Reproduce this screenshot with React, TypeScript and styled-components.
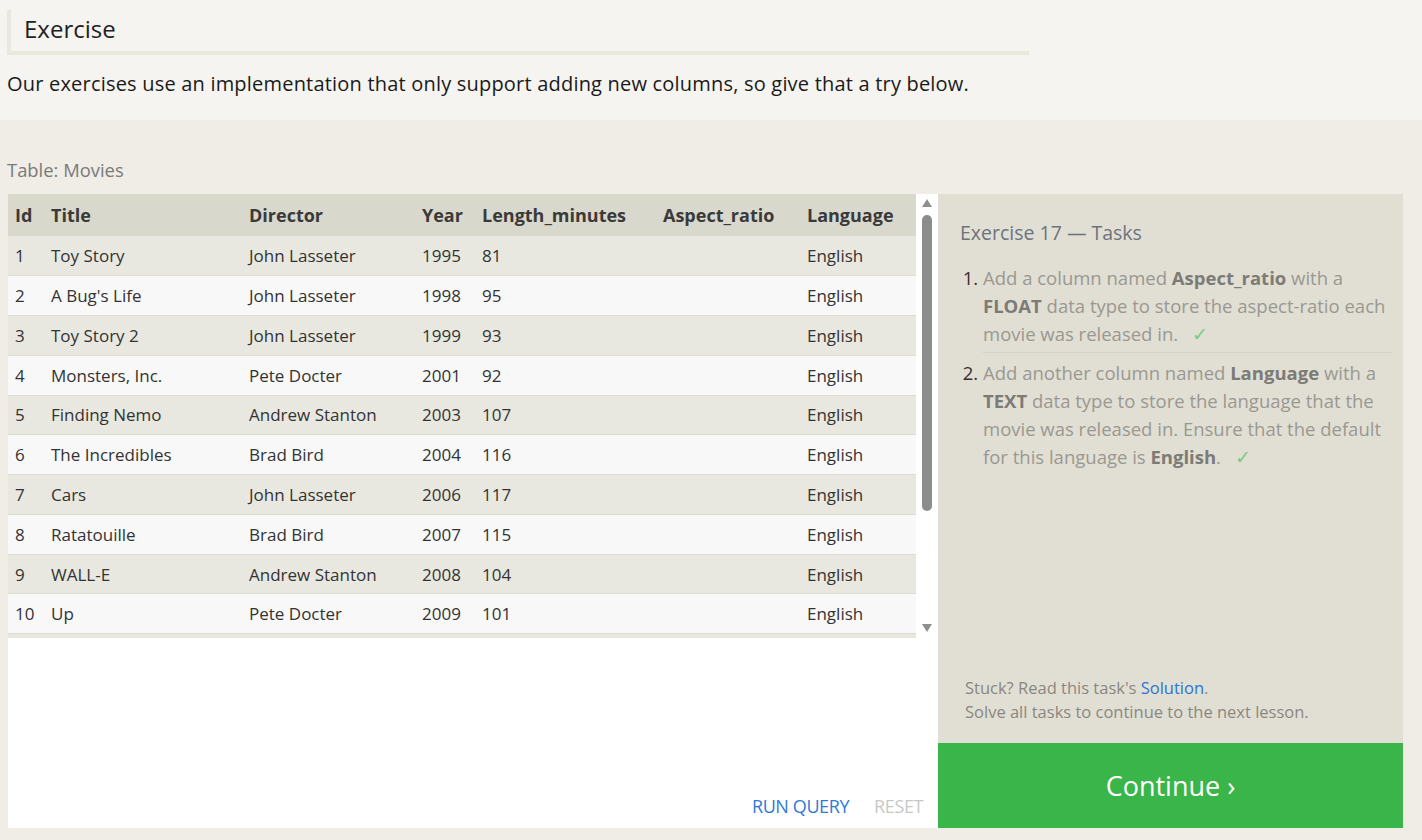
import React from "react";
import styled, { createGlobalStyle } from "styled-components";

const GlobalStyle = createGlobalStyle`
  html, body { margin: 0; padding: 0; }
  body {
    background: #efede6;
    font-family: "Open Sans", "Noto Sans", sans-serif;
    color: #333;
    -webkit-font-smoothing: antialiased;
  }
`;

const Page = styled.div`
  width: 1422px;
  height: 840px;
  overflow: hidden;
  display: flex;
  flex-direction: column;
`;

const Intro = styled.section`
  background: #f5f4f0;
  height: 120px;
  box-sizing: border-box;
  padding: 10px 0 0 7px;
`;

const Heading = styled.h2`
  margin: 0;
  width: 1022px;
  box-sizing: border-box;
  height: 45px;
  border-left: 4px solid #e8e8df;
  border-bottom: 4px solid #e8e8df;
  padding-left: 13px;
  font-size: 24px;
  font-weight: 400;
  line-height: 37px;
  color: #222;
`;

const Lead = styled.p`
  margin: 16px 0 0;
  font-size: 20px;
  letter-spacing: 0.2px;
  line-height: 26px;
  color: #1a1a1a;
`;

const Workspace = styled.section`
  flex: 1;
  box-sizing: border-box;
  padding: 38px 19px 12px 8px;
  display: flex;
  flex-direction: column;
`;

const TableLabel = styled.div`
  font-size: 18.4px;
  line-height: 24px;
  color: #7a7a7a;
  margin-left: -1px;
  margin-bottom: 12px;
`;

const Split = styled.div`
  flex: 1;
  display: grid;
  grid-template-columns: 930px 465px;
  min-height: 0;
`;

const LeftColumn = styled.div`
  display: flex;
  flex-direction: column;
  background: #fff;
`;

const TableViewport = styled.div`
  height: 444px;
  display: flex;
`;

const TableClip = styled.div`
  width: 908px;
  overflow: hidden;
`;

const Table = styled.table`
  width: 908px;
  border-collapse: collapse;
  table-layout: fixed;
  font-size: 17px;
`;

const HeadCell = styled.th<{ $w: number }>`
  box-sizing: border-box;
  width: ${(p) => p.$w}px;
  height: 42px;
  padding: 0 0 0 7px;
  text-align: left;
  font-size: 18px;
  font-weight: 700;
  color: #3a3a3a;
  background: #d9d8cc;
  white-space: nowrap;
`;

const Row = styled.tr<{ $odd: boolean }>`
  background: ${(p) => (p.$odd ? "#e9e8e0" : "#f8f8f8")};
  border-bottom: 1px solid #dddcd4;
`;

const Cell = styled.td`
  box-sizing: border-box;
  height: 39.78px;
  padding: 0 0 0 7px;
  color: #333;
  white-space: nowrap;
`;

const Scrollbar = styled.div`
  width: 21px;
  background: #fff;
  display: flex;
  flex-direction: column;
  align-items: center;
`;

const Arrow = styled.div<{ $down?: boolean }>`
  width: 0;
  height: 0;
  border-left: 5px solid transparent;
  border-right: 5px solid transparent;
  ${(p) =>
    p.$down
      ? "border-top: 8px solid #8f8f8f; margin-top: auto; margin-bottom: 6px;"
      : "border-bottom: 8px solid #8f8f8f; margin-top: 5px;"}
`;

const Thumb = styled.div`
  width: 10px;
  height: 296px;
  margin-top: 8px;
  border-radius: 5px;
  background: #8c8c8c;
`;

const Editor = styled.div`
  flex: 1;
  background: #fff;
  display: flex;
  align-items: flex-end;
  justify-content: flex-end;
  padding: 0 15px 10px 0;
  gap: 25px;
`;

const EditorButton = styled.button<{ $muted?: boolean }>`
  border: 0;
  background: transparent;
  padding: 0;
  font-family: "Open Sans", sans-serif;
  font-size: 18px;
  letter-spacing: -0.4px;
  line-height: 24px;
  color: ${(p) => (p.$muted ? "#c8c8c8" : "#2f7ad6")};
  cursor: pointer;
`;

const RightColumn = styled.aside`
  display: flex;
  flex-direction: column;
`;

const TaskPanel = styled.div`
  flex: 1;
  background: #e1dfd4;
  padding: 25px 11px 0 22px;
  display: flex;
  flex-direction: column;
`;

const TaskTitle = styled.h3`
  margin: 0;
  font-size: 19.5px;
  font-weight: 400;
  line-height: 28px;
  color: #6d737e;
`;

const TaskList = styled.ol`
  margin: 17px 0 0;
  padding: 0 0 0 23px;
  font-size: 18.5px;
  line-height: 28px;
  color: #9a9891;
`;

const Task = styled.li<{ $divided?: boolean }>`
  &::marker { color: #3a2f2f; }
  ${(p) =>
    p.$divided
      ? "border-bottom: 1px solid #d4d2c6; padding-bottom: 4px; margin-bottom: 6px;"
      : ""}
`;

const Strong = styled.b`
  color: #7c7b76;
  font-weight: 700;
`;

const Check = styled.span`
  color: #7ccb82;
  margin-left: 14px;
`;

const Hint = styled.p`
  margin: auto 0 19px 5px;
  font-size: 16.5px;
  line-height: 24px;
  color: #8a8780;
`;

const HintLink = styled.a`
  color: #2e74d6;
  text-decoration: none;
`;

const ContinueButton = styled.button`
  height: 85px;
  border: 0;
  background: #3ab54a;
  color: #fff;
  font-family: "Open Sans", sans-serif;
  font-size: 27px;
  cursor: pointer;
`;

const columns: [string, number][] = [
  ["Id", 36],
  ["Title", 198],
  ["Director", 173],
  ["Year", 60],
  ["Length_minutes", 181],
  ["Aspect_ratio", 144],
  ["Language", 116],
];

const movies: [number, string, string, number, number][] = [
  [1, "Toy Story", "John Lasseter", 1995, 81],
  [2, "A Bug's Life", "John Lasseter", 1998, 95],
  [3, "Toy Story 2", "John Lasseter", 1999, 93],
  [4, "Monsters, Inc.", "Pete Docter", 2001, 92],
  [5, "Finding Nemo", "Andrew Stanton", 2003, 107],
  [6, "The Incredibles", "Brad Bird", 2004, 116],
  [7, "Cars", "John Lasseter", 2006, 117],
  [8, "Ratatouille", "Brad Bird", 2007, 115],
  [9, "WALL-E", "Andrew Stanton", 2008, 104],
  [10, "Up", "Pete Docter", 2009, 101],
  [11, "Toy Story 3", "Lee Unkrich", 2010, 103],
  [12, "Cars 2", "John Lasseter", 2011, 120],
  [13, "Brave", "Brenda Chapman", 2012, 102],
  [14, "Monsters University", "Dan Scanlon", 2013, 110],
];

export default function App() {
  return (
    <Page>
      <GlobalStyle />
      <Intro>
        <Heading>Exercise</Heading>
        <Lead>
          Our exercises use an implementation that only support adding new columns, so give that a try below.
        </Lead>
      </Intro>
      <Workspace>
        <TableLabel>Table: Movies</TableLabel>
        <Split>
          <LeftColumn>
            <TableViewport>
              <TableClip>
                <Table>
                  <thead>
                    <tr>
                      {columns.map(([name, w]) => (
                        <HeadCell key={name} $w={w}>
                          {name}
                        </HeadCell>
                      ))}
                    </tr>
                  </thead>
                  <tbody>
                    {movies.map(([id, title, director, year, len], i) => (
                      <Row key={id} $odd={i % 2 === 0}>
                        <Cell>{id}</Cell>
                        <Cell>{title}</Cell>
                        <Cell>{director}</Cell>
                        <Cell>{year}</Cell>
                        <Cell>{len}</Cell>
                        <Cell></Cell>
                        <Cell>English</Cell>
                      </Row>
                    ))}
                  </tbody>
                </Table>
              </TableClip>
              <Scrollbar>
                <Arrow />
                <Thumb />
                <Arrow $down />
              </Scrollbar>
            </TableViewport>
            <Editor>
              <EditorButton>RUN QUERY</EditorButton>
              <EditorButton $muted>RESET</EditorButton>
            </Editor>
          </LeftColumn>
          <RightColumn>
            <TaskPanel>
              <TaskTitle>Exercise 17 — Tasks</TaskTitle>
              <TaskList>
                <Task $divided>
                  Add a column named <Strong>Aspect_ratio</Strong> with a <Strong>FLOAT</Strong> data type to store
                  the aspect-ratio each movie was released in.<Check>✓</Check>
                </Task>
                <Task>
                  Add another column named <Strong>Language</Strong> with a <Strong>TEXT</Strong> data type to store
                  the language that the movie was released in. Ensure that the default for this language is{" "}
                  <Strong>English</Strong>.<Check>✓</Check>
                </Task>
              </TaskList>
              <Hint>
                Stuck? Read this task's <HintLink href="#">Solution</HintLink>.
                <br />
                Solve all tasks to continue to the next lesson.
              </Hint>
            </TaskPanel>
            <ContinueButton>Continue ›</ContinueButton>
          </RightColumn>
        </Split>
      </Workspace>
    </Page>
  );
}
